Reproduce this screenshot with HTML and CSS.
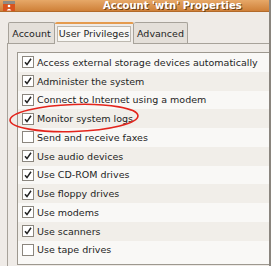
FILE: index.html
```html
<!DOCTYPE html>
<html lang="en">
<head>
  <meta charset="UTF-8" />
  <title>Account 'wtn' Properties</title>
  <link rel="stylesheet" href="styles.css">
</head>
<body>

  <div class="window">
    <div class="titlebar">
      <svg class="app-icon" width="12" height="10" viewBox="0 0 12 10">
        <rect x="0" y="0" width="12" height="3" fill="#8e8a84"/>
        <rect x="0" y="3" width="12" height="7" fill="#d8541e"/>
        <circle cx="6" cy="5" r="1.3" fill="#fff"/>
        <path d="M3.6 9.5 Q6 6 8.4 9.5 Z" fill="#fff"/>
      </svg>
      <span class="title">Account 'wtn' Properties</span>
    </div>

    <div class="tabs">
      <div class="tab">Account</div>
      <div class="tab active"><span class="focus">User Privileges</span></div>
      <div class="tab">Advanced</div>
    </div>

    <div class="notebook">
      <ul class="priv-list">
        <li class="on">Access external storage devices automatically</li>
        <li class="on">Administer the system</li>
        <li class="on">Connect to Internet using a modem</li>
        <li class="on">Monitor system logs</li>
        <li>Send and receive faxes</li>
        <li class="on">Use audio devices</li>
        <li class="on">Use CD-ROM drives</li>
        <li class="on">Use floppy drives</li>
        <li class="on">Use modems</li>
        <li class="on">Use scanners</li>
        <li>Use tape drives</li>
      </ul>
    </div>
  </div>

  <!-- hand-drawn highlight -->
  <svg class="mark" width="271" height="266" viewBox="0 0 271 266">
    <ellipse cx="74" cy="118" rx="64" ry="13.5" transform="rotate(-2 74 118)" fill="none" stroke="#e3241c" stroke-width="1.6"/>
  </svg>

</body>
</html>
```

FILE: styles.css
```css
:root {
  --bg: #efebe7;
  --line: #a7a29a;
  --row-a: #f9f8f6;
  --row-b: #f1eee9;
  --text: #1e1e1e;
}

* {
  margin: 0;
  padding: 0;
  box-sizing: border-box;
}

body {
  width: 271px;
  height: 266px;
  overflow: hidden;
  background: var(--bg);
  font-family: "DejaVu Sans", sans-serif;
  font-size: 9.5px;
  color: var(--text);
  position: relative;
}

.window {
  display: flex;
  flex-direction: column;
  height: 266px;
  border-right: 2px solid #8a857e;
}

.titlebar {
  height: 12px;
  display: flex;
  align-items: center;
  background: linear-gradient(to bottom, #e6a868, #cf8038);
  border-bottom: 1px solid #b26a2a;
}

.app-icon {
  margin-left: 3px;
  margin-top: 1px;
}

.title {
  margin-left: 88px;
  font-weight: bold;
  font-size: 10px;
  line-height: 12px;
  color: #fff;
  text-shadow: 1px 1px 0 #6b3e14;
}

.tabs {
  display: flex;
  margin: 10px 0 0 8px;
  height: 21px;
  position: relative;
  z-index: 1;
}

.tab {
  display: flex;
  align-items: center;
  justify-content: center;
  white-space: nowrap;
  background: #e4dfd9;
  border: 1px solid var(--line);
  border-bottom: none;
  border-radius: 2px 2px 0 0;
}

.tab:first-child {
  width: 47px;
}

.tab:last-child {
  width: 54px;
  border-left: none;
}

.tab.active {
  width: 79px;
  height: 22px;
  background: var(--bg);
  border-top: 2px solid #e59b4e;
  border-left: none;
}

.focus {
  padding: 1px 1px 2px;
  background: #f8f7f4;
  border: 1px solid #bdb8b0;
}

.notebook {
  flex: 1;
  margin-left: 7px;
  border-top: 1px solid var(--line);
  border-left: 1px solid var(--line);
  padding: 8px 0 0 9px;
}

.priv-list {
  list-style: none;
  border: 1px solid #9d988f;
  border-right: none;
  height: 213px;
  background: var(--row-a);
}

.priv-list li {
  display: flex;
  align-items: center;
  height: 18.75px;
  padding-left: 4px;
  background: var(--row-a);
}

.priv-list li:nth-child(even) {
  background: var(--row-b);
}

.priv-list li::before {
  content: '';
  width: 10px;
  height: 10px;
  margin-right: 3px;
  flex: none;
  border: 1px solid #8b867e;
  background: #fff;
}

.priv-list li.on::before {
  background: #fff url("data:image/svg+xml,%3Csvg xmlns='http://www.w3.org/2000/svg' width='8' height='8' viewBox='0 0 8 8'%3E%3Cpath d='M1 4.2 L3 6.6 L7 0.8' fill='none' stroke='%23222' stroke-width='1.5'/%3E%3C/svg%3E") center / 8px 8px no-repeat;
}

.mark {
  position: absolute;
  left: 0;
  top: 0;
  pointer-events: none;
}
```
